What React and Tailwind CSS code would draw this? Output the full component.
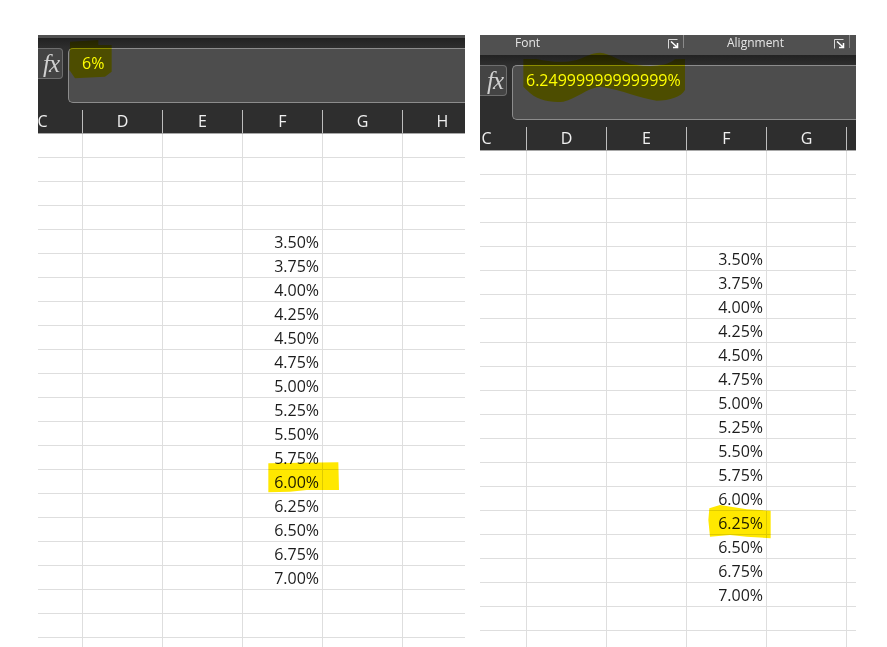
import React from "react";

const values = ["3.50%","3.75%","4.00%","4.25%","4.50%","4.75%","5.00%","5.25%","5.50%","5.75%","6.00%","6.25%","6.50%","6.75%","7.00%"];
const rows = ["","","","",...values,"","",""];
const FONT = "font-['Open_Sans','Noto_Sans',sans-serif]";

function Launcher() {
  return (
    <svg width="11" height="10" viewBox="0 0 11 10" className="shrink-0" fill="none">
      <path d="M0.5 9.5V0.5H9.5" stroke="#d8d8d8" strokeWidth="1" />
      <path d="M3 2.5L9 8M9.5 4V8.5H5" stroke="#ffffff" strokeWidth="1.5" />
    </svg>
  );
}

function Fx({ w }) {
  return (
    <div className={`${w} h-[31px] shrink-0 flex items-center justify-end pr-[3px] bg-[#444444] border border-l-0 border-[#6e6e6e] rounded-r-[4px] font-['Liberation_Serif',serif] italic text-[25px] leading-none text-[#d0d0d0]`}>
      <span className="tracking-[-1px]">fx</span>
    </div>
  );
}

function Panel({ firstW, fxW, formula, cols, lastLabel, extraTop }) {
  return (
    <div className={`w-full flex flex-col ${FONT}`}>
      {extraTop}
      <div className="bg-[#2e2e2e]">
        <div className="flex items-start pr-0">
          <Fx w={fxW} />
          <div className="ml-[5px] flex-1 h-[55px] bg-[#4d4d4d] border border-r-0 border-[#8c8c8c] rounded-l-[5px] pl-[13px] pt-[3px] text-[16px] leading-[22px] text-[#ffff00] whitespace-nowrap">
            {formula}
          </div>
        </div>
        <div className="flex h-[24px] mt-[7px] border-b border-[#a8a8a8] text-[16px] text-[#f0f0f0]">
          <div className={`${firstW} shrink-0 flex justify-end overflow-hidden border-r border-[#bdbdbd]`}>
            <div className="w-[79px] shrink-0 text-center leading-[23px]">C</div>
          </div>
          {cols.map((c) => (
            <div key={c} className="w-[80px] shrink-0 text-center leading-[23px] border-r border-[#bdbdbd]">{c}</div>
          ))}
          <div className="flex-1 overflow-hidden">
            <div className="w-[79px] text-center leading-[23px]">{lastLabel}</div>
          </div>
        </div>
      </div>
      <div className="bg-white">
        {rows.map((v, i) => (
          <div key={i} className="flex h-[24px] border-b border-[#dedede]">
            <div className={`${firstW} shrink-0 border-r border-[#dedede]`} />
            {cols.map((c) => (
              <div key={c} className="w-[80px] shrink-0 border-r border-[#dedede] text-right pr-[3px] text-[16px] leading-[25px] text-[#1c1c1c]">
                {c === "F" ? v : ""}
              </div>
            ))}
            <div className="flex-1" />
          </div>
        ))}
      </div>
    </div>
  );
}

export default function App() {
  return (
    <div className="relative w-[887px] h-[647px] overflow-hidden bg-white flex items-start">
      <div className="ml-[38px] mt-[35px] w-[427px] h-[612px] overflow-hidden">
        <Panel
          firstW="w-[45px]"
          fxW="w-[25px]"
          formula="6%"
          cols={["D","E","F","G"]}
          lastLabel="H"
          extraTop={
            <div>
              <div className="h-[3px] bg-[#505050]" />
              <div className="h-[10px] bg-gradient-to-b from-[#222222] to-[#2e2e2e]" />
            </div>
          }
        />
      </div>
      <div className="ml-[15px] mt-[35px] w-[376px] h-[612px] overflow-hidden">
        <Panel
          firstW="w-[47px]"
          fxW="w-[27px]"
          formula="6.24999999999999%"
          cols={["D","E","F","G"]}
          lastLabel=""
          extraTop={
            <div>
              <div className={`h-[20px] bg-[#505050] flex text-[12px] text-[#e6e6e6] ${FONT}`}>
                <div className="w-[204px] shrink-0 h-[13px] flex items-start border-r border-[#8a8a8a] pl-[35px] pr-[4px]">
                  <span className="leading-[15px]">Font</span>
                  <span className="ml-auto mt-[4px]"><Launcher /></span>
                </div>
                <div className="w-[166px] shrink-0 h-[13px] flex items-start border-r border-[#8a8a8a] pl-[43px] pr-[4px]">
                  <span className="leading-[15px]">Alignment</span>
                  <span className="ml-auto mt-[4px]"><Launcher /></span>
                </div>
              </div>
              <div className="h-[10px] bg-gradient-to-b from-[#222222] to-[#2e2e2e]" />
            </div>
          }
        />
      </div>

      {/* highlighter strokes */}
      <svg className="absolute left-[30px] top-[30px] mix-blend-multiply" width="220" height="130" viewBox="0 0 660 390">
        <path d="M120 35L205 30L205 45L245 45L245 125L225 140L135 145L118 120Z" fill="#ffff00" />
      </svg>
      <svg className="absolute left-[470px] top-[30px] mix-blend-multiply" width="240" height="130" viewBox="0 0 720 390">
        <path d="M160 87L200 87C240 95 280 100 320 90C345 82 365 68 390 68C420 70 450 95 500 105C540 110 590 110 615 88L645 87L645 180C635 200 600 212 560 212C510 205 460 180 390 170C350 175 320 205 280 215C240 218 200 212 170 180L160 170Z" fill="#ffff00" />
      </svg>
      <svg className="absolute left-[240px] top-[430px] mix-blend-multiply" width="120" height="100" viewBox="0 0 360 300">
        <path d="M85 100L180 98L295 97L297 180L200 180L150 185L85 187Z" fill="#ffe800" />
      </svg>
      <svg className="absolute left-[680px] top-[480px] mix-blend-multiply" width="120" height="100" viewBox="0 0 360 300">
        <path d="M88 85L120 75L200 88L272 92L272 175L200 170L150 165L90 170L85 120Z" fill="#ffe800" />
      </svg>
    </div>
  );
}
